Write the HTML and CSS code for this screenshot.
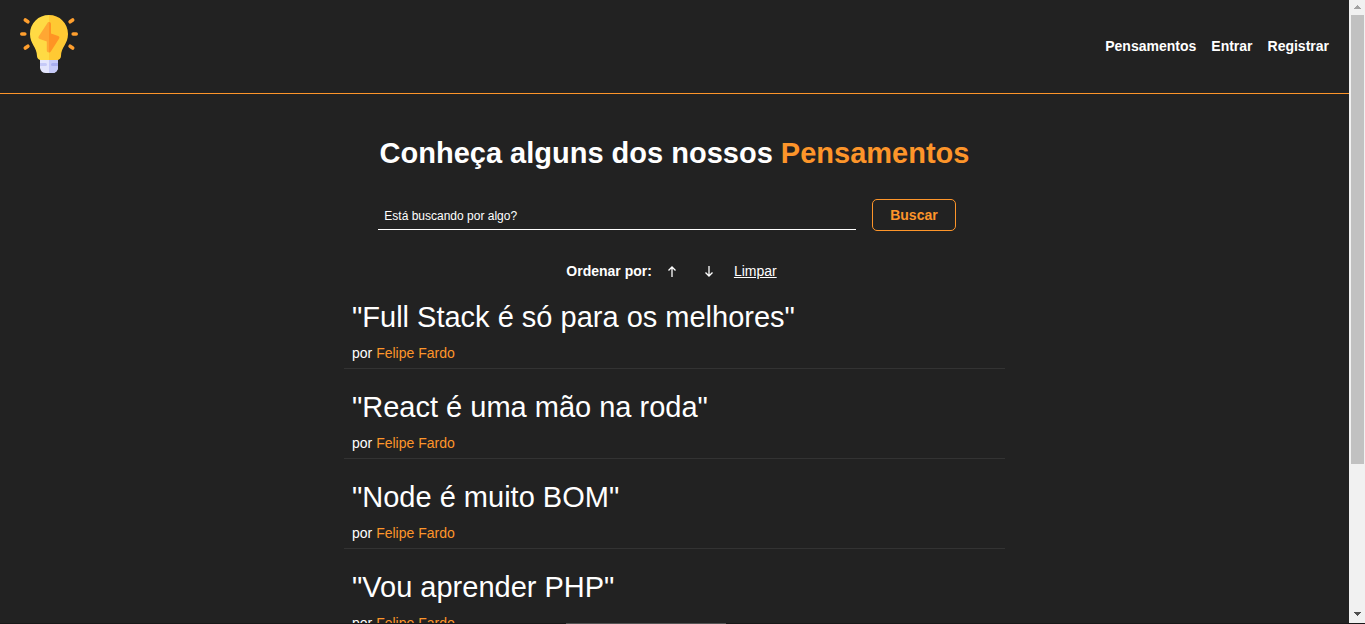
FILE: index.html
```html
<!DOCTYPE html>
<html lang="pt-BR">
<head>
<meta charset="utf-8">
<title>Pensamentos</title>
<link rel="stylesheet" href="styles.css">
</head>
<body>
<div class="window">
  <div class="page">
    <header class="header">
      <a class="logo" href="#" aria-label="Início">
        <svg viewBox="0 0 60 60" width="60" height="60" aria-hidden="true">
          <path d="M21 42h18v12a6 6 0 0 1-6 5h-6a6 6 0 0 1-6-5z" fill="#e4e6fd"/>
          <path d="M30 42h9v12a6 6 0 0 1-6 5h-3z" fill="#c6caf8"/>
          <path d="M21 49h5.500a1.500 1.500 0 0 1 0 3h-5.500z" fill="#c6caf8"/>
          <path d="M39 49h-5.500a1.500 1.500 0 0 0 0 3h5.500z" fill="#a9aef0"/>
          <path d="M30 1C19.500 1 11 9 11 20c0 10 7 13 7 22 0 2 1.500 4 4 4h8z" fill="#ffda44"/>
          <path d="M30 1c10.500 0 19 8 19 19 0 10-7 13-7 22 0 2-1.500 4-4 4h-8z" fill="#ffc933"/>
          <path d="M30 8c-.8 0-1.300.5-1.700 1.200l-8.500 13c-.8 1.300-.3 2.300 1 2.800l7 2.400v9.100c0 1.300.9 2 2.200 2z" fill="#ffa733"/>
          <path d="M30 8c1.200 0 2 .7 2 2v9.500l7.200 2.600c1.300.5 1.500 1.500.8 2.600l-8 12.500c-.5.8-1.100 1.300-2 1.300z" fill="#ff9424"/>
          <g stroke="#ff9f2e" stroke-width="3.600" stroke-linecap="round">
            <path d="M2.800 20h3M6.300 6l2.600 1.800M6.300 34l2.600-1.800M54.200 20h3M53.700 6l-2.600 1.800M53.700 34l-2.600-1.800"/>
          </g>
        </svg>
      </a>
      <nav class="nav">
        <a href="#">Pensamentos</a>
        <a href="#">Entrar</a>
        <a href="#">Registrar</a>
      </nav>
    </header>
    <main class="main">
      <h1 class="title">Conheça alguns dos nossos <span class="accent">Pensamentos</span></h1>
      <form class="search">
        <input class="search-input" type="text" placeholder="Está buscando por algo?" aria-label="Está buscando por algo?">
        <button class="search-button" type="button">Buscar</button>
      </form>
      <div class="order">
        <span class="order-label">Ordenar por:</span>
        <button class="arrow" type="button" aria-label="Ordem crescente"><svg viewBox="0 0 10 12" width="10" height="12"><path d="M5 12V2M1.500 5.500L5 2 8.500 5.500"/></svg></button>
        <button class="arrow" type="button" aria-label="Ordem decrescente"><svg viewBox="0 0 10 12" width="10" height="12"><path d="M5 1v10M1.500 7.500L5 11 8.500 7.500"/></svg></button>
        <a class="clear" href="#">Limpar</a>
      </div>
      <section class="list">
        <article class="thought"><p class="quote">"Full Stack é só para os melhores"</p><p class="author">por <span class="accent">Felipe Fardo</span></p></article>
        <article class="thought"><p class="quote">"React é uma mão na roda"</p><p class="author">por <span class="accent">Felipe Fardo</span></p></article>
        <article class="thought"><p class="quote">"Node é muito BOM"</p><p class="author">por <span class="accent">Felipe Fardo</span></p></article>
        <article class="thought"><p class="quote">"Vou aprender PHP"</p><p class="author">por <span class="accent">Felipe Fardo</span></p></article>
      </section>
    </main>
  </div>
  <div class="scrollbar" aria-hidden="true">
    <svg class="scroll-arrow" viewBox="0 0 7 4" width="7" height="4"><path d="M0 4V3h1V2h1V1h1V0h1v1h1v1h1v1h1v1z" fill="#a3a3a3"/></svg>
    <div class="scroll-track"><div class="scroll-thumb"></div></div>
    <svg class="scroll-arrow" viewBox="0 0 7 4" width="7" height="4"><path d="M0 0v1h1v1h1v1h1v1h1V3h1V2h1V1h1V0z" fill="#505050"/></svg>
  </div>
</div>
<div class="edge"></div>
</body>
</html>
```
FILE: styles.css
```css
* {
  box-sizing: border-box;
  margin: 0;
  padding: 0;
}

body {
  height: 100vh;
  overflow: hidden;
  background: #222;
  color: #fff;
  font: 14px/16px "Liberation Sans", Arial, sans-serif;
}

a {
  color: inherit;
}

.accent {
  color: #fd952a;
}

.window {
  display: flex;
  height: 100vh;
}

.page {
  flex: 1;
  min-width: 0;
  overflow: hidden;
}

.header {
  display: flex;
  justify-content: space-between;
  align-items: flex-start;
  padding: 14px 20px 19px 19px;
  border-bottom: 1px solid #fd952a;
}

.logo svg {
  display: block;
}

.nav {
  display: flex;
  gap: 15px;
  padding-top: 24px;
  font-weight: bold;
}

.nav a {
  text-decoration: none;
}

.main {
  display: flex;
  flex-direction: column;
  align-items: center;
  padding-top: 42px;
}

.title {
  font-size: 29px;
  line-height: 34px;
}

.search {
  display: flex;
  gap: 16px;
  width: 42.8%;
  margin: 29px 15px 32px 0;
}

.search-input {
  flex: 1;
  min-width: 0;
  height: 31px;
  padding: 4px 6px 1px;
  border: 0;
  border-bottom: 1px solid #fff;
  background: transparent;
  color: #fff;
  font: 12px "Liberation Sans", Arial, sans-serif;
}

.search-input::placeholder {
  color: #fff;
  opacity: 1;
}

.search-button {
  padding: 7px 17px;
  border: 1px solid #fd952a;
  border-radius: 5px;
  background: transparent;
  color: #fd952a;
  font: bold 14px/16px "Liberation Sans", Arial, sans-serif;
}

.order {
  display: flex;
  align-items: center;
  margin-right: 6px;
}

.order-label {
  margin-right: 15px;
  font-weight: bold;
}

.arrow {
  display: flex;
  margin-right: 27px;
  border: 0;
  background: transparent;
}

.arrow + .arrow {
  margin-right: 20px;
}

.arrow path {
  fill: none;
  stroke: #fff;
  stroke-width: 1.3;
}

.list {
  width: 49%;
  margin-top: 22px;
}

.thought {
  padding: 0 8px 7px;
  margin-bottom: 22px;
  border-bottom: 1px solid #333;
}

.quote {
  margin-bottom: 11px;
  font-size: 29px;
  line-height: 33px;
}

.scrollbar {
  display: flex;
  flex-direction: column;
  align-items: center;
  width: 16px;
  padding: 5px 0 8px;
  background: #f1f1f1;
}

.scroll-arrow {
  flex: none;
}

.scroll-track {
  flex: 1;
  width: 13px;
  padding: 6px 0;
}

.scroll-thumb {
  height: 76%;
  background: #c1c1c1;
}

.edge {
  position: fixed;
  right: 0;
  bottom: 0;
  left: 0;
  height: 1px;
  background: linear-gradient(#555, #555) 47% 0 / 160px 1px no-repeat #181818;
}
```
